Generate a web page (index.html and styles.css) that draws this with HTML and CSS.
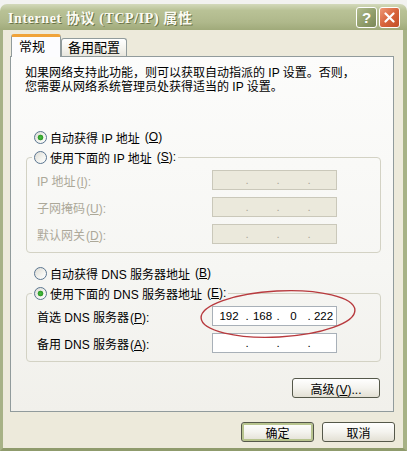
FILE: index.html
```html
<!DOCTYPE html>
<html lang="zh-CN">
<head>
    <meta charset="UTF-8">
    <title>Internet 协议 (TCP/IP) 属性</title>
    <link rel="stylesheet" href="styles.css">
</head>
<body>
    <div class="window">
        <div class="titlebar">
            <span class="title">Internet 协议 (TCP/IP) 属性</span>
            <div class="caption-btns">
                <span class="cbtn help">?</span>
                <span class="cbtn close">
                    <svg width="11" height="11" viewBox="0 0 11 11"><path d="M1.5 1.5 L9.5 9.5 M9.5 1.5 L1.5 9.5" stroke="#fff" stroke-width="2.2" stroke-linecap="round"/></svg>
                </span>
            </div>
        </div>

        <div class="frame">
            <div class="tabs">
                <div class="tab active">常规</div>
                <div class="tab">备用配置</div>
            </div>

            <div class="panel">
                <p class="intro">如果网络支持此功能，则可以获取自动指派的 IP 设置。否则，<br>您需要从网络系统管理员处获得适当的 IP 设置。</p>

                <div class="radio first"><span class="mark checked"></span>自动获得 IP 地址<span class="key">(<u>O</u>)</span></div>
                <fieldset class="group">
                    <legend><div class="radio"><span class="mark"></span>使用下面的 IP 地址<span class="key">(<u>S</u>):</span></div></legend>
                    <div class="row disabled">
                        <span>IP 地址<span class="key">(<u>I</u>):</span></span>
                        <div class="ip off"><span class="seg"></span><span class="dot">.</span><span class="seg"></span><span class="dot">.</span><span class="seg"></span><span class="dot">.</span><span class="seg"></span></div>
                    </div>
                    <div class="row disabled">
                        <span>子网掩码<span class="key">(<u>U</u>):</span></span>
                        <div class="ip off"><span class="seg"></span><span class="dot">.</span><span class="seg"></span><span class="dot">.</span><span class="seg"></span><span class="dot">.</span><span class="seg"></span></div>
                    </div>
                    <div class="row disabled">
                        <span>默认网关<span class="key">(<u>D</u>):</span></span>
                        <div class="ip off"><span class="seg"></span><span class="dot">.</span><span class="seg"></span><span class="dot">.</span><span class="seg"></span><span class="dot">.</span><span class="seg"></span></div>
                    </div>
                </fieldset>

                <div class="radio second"><span class="mark"></span>自动获得 DNS 服务器地址<span class="key">(<u>B</u>)</span></div>
                <fieldset class="group">
                    <legend><div class="radio"><span class="mark checked"></span>使用下面的 DNS 服务器地址<span class="key">(<u>E</u>):</span></div></legend>
                    <div class="row">
                        <span>首选 DNS 服务器<span class="key">(<u>P</u>):</span></span>
                        <div class="ip"><span class="seg">192</span><span class="dot">.</span><span class="seg">168</span><span class="dot">.</span><span class="seg">0</span><span class="dot">.</span><span class="seg">222</span></div>
                    </div>
                    <div class="row">
                        <span>备用 DNS 服务器<span class="key">(<u>A</u>):</span></span>
                        <div class="ip"><span class="seg"></span><span class="dot">.</span><span class="seg"></span><span class="dot">.</span><span class="seg"></span><span class="dot">.</span><span class="seg"></span></div>
                    </div>
                </fieldset>

                <div class="adv-row">
                    <button class="btn adv">高级<span class="key">(<u>V</u>)...</span></button>
                </div>
            </div>

            <div class="footer">
                <button class="btn default">确定</button>
                <button class="btn">取消</button>
            </div>
        </div>
    </div>

    <!-- red marker drawn over the screenshot -->
    <svg class="marker" width="407" height="451" viewBox="0 0 407 451">
        <ellipse cx="278" cy="314" rx="77" ry="23" transform="rotate(-3 278 314)" fill="none" stroke="#b83a3e" stroke-width="1.4"/>
    </svg>
</body>
</html>
```

FILE: styles.css
```css
* {
    margin: 0;
    padding: 0;
    box-sizing: border-box;
}

body {
    font-family: "Liberation Sans", "Noto Sans CJK SC", sans-serif;
    font-size: 12px;
    color: #000;
    background: #f2f2f0;
    width: 407px;
    height: 451px;
    overflow: hidden;
}

.key {
    font-family: "Liberation Sans", sans-serif;
    margin-left: 1px;
}

.window {
    margin-top: 4px;
    width: 407px;
    height: 447px;
    display: flex;
    flex-direction: column;
}

.titlebar {
    height: 26px;
    border-radius: 7px 7px 0 0;
    background: linear-gradient(180deg, #d3d9bb 0%, #b9c296 25%, #afb88b 70%, #a0aa7a 100%);
    display: flex;
    align-items: center;
    justify-content: space-between;
    padding: 0 7px 0 8px;
}

.title {
    font-family: "Liberation Serif", "Noto Sans CJK SC", serif;
    font-size: 14px;
    font-weight: bold;
    color: #fbfbf4;
    text-shadow: 1px 1px 0 #6c7548;
    letter-spacing: 0.6px;
}

.caption-btns {
    display: flex;
    gap: 2px;
}

.cbtn {
    width: 21px;
    height: 21px;
    border: 1px solid #fff;
    border-radius: 3px;
    display: flex;
    align-items: center;
    justify-content: center;
}

.help {
    background: linear-gradient(135deg, #b0bb8c 0%, #8e9b68 60%, #7b8858 100%);
    color: #fff;
    font-weight: bold;
    font-size: 15px;
}

.close {
    background: linear-gradient(135deg, #ee9a78 0%, #d8643c 50%, #c24e26 100%);
}

.frame {
    flex: 1;
    background: #edeadb;
    border-left: 3px solid #a7b286;
    border-right: 4px solid #a7b286;
    border-bottom: 3px solid #8f9b6c;
    padding: 4px 9px 0 7px;
}

.tabs {
    display: flex;
    align-items: flex-end;
    height: 22px;
    padding-left: 1px;
}

.tab {
    height: 18px;
    padding: 0 6px;
    line-height: 17px;
    border: 1px solid #919b9c;
    border-bottom: none;
    border-radius: 3px 3px 0 0;
    background: linear-gradient(180deg, #fff 0%, #f3f2ec 60%, #e8e6dd 100%);
    font-size: 13px;
}

.tab.active {
    height: 23px;
    margin-bottom: -1px;
    width: 50px;
    padding: 0 7px;
    line-height: 20px;
    background: #fcfcfe;
    border-top: 3px solid #f0a33a;
    position: relative;
    z-index: 1;
}

.panel {
    height: 356px;
    border: 1px solid #919b9c;
    background: linear-gradient(180deg, #fcfcfb 0%, #f6f6f3 60%, #f1f0eb 100%);
}

.intro {
    margin: 9px 0 0 14px;
    line-height: 14px;
}

.radio {
    display: flex;
    align-items: center;
    height: 20px;
    gap: 3px;
    white-space: nowrap;
}

.radio .key {
    margin-left: 2px;
}

.radio.first {
    margin: 33px 0 0 23px;
}

.radio.second {
    margin: 10px 0 0 23px;
}

.mark {
    width: 13px;
    height: 13px;
    flex: none;
    border-radius: 50%;
    border: 1px solid #5a7590;
    background: linear-gradient(135deg, #dcdbd4 0%, #f4f4f0 60%, #fff 100%);
}

.mark.checked {
    background: radial-gradient(circle, #48c040 0, #2f9a2a 2.5px, transparent 3.2px),
                linear-gradient(135deg, #dcdbd4 0%, #f4f4f0 60%, #fff 100%);
}

.group {
    margin: 0 12px 0 15px;
    border: 1px solid #d3d2c4;
    border-radius: 4px;
    padding: 3px 0 8px 10px;
}

.group legend {
    margin-left: -5px;
    padding: 0 2px;
}

.row {
    display: grid;
    grid-template-columns: 175px 125px;
    align-items: center;
}

.row + .row {
    margin-top: 7px;
}

.row.disabled {
    color: #aca899;
}

.ip {
    height: 20px;
    border: 1px solid #a8b0b8;
    background: #fff;
    display: flex;
    align-items: center;
    font-size: 11.5px;
}

.ip.off {
    background: #ebe9dc;
    border-color: #cac8ba;
    color: #aca899;
}

.seg {
    width: 27px;
    text-align: center;
}

.seg:first-child {
    width: 32px;
}

.seg:last-child {
    width: 25px;
}

.dot {
    width: 4px;
    text-align: center;
}

.adv-row {
    display: flex;
    justify-content: flex-end;
    margin: 16px 13px 0 0;
}

.btn {
    font-family: "Liberation Sans", "Noto Sans CJK SC", sans-serif;
    font-size: 12px;
    height: 20px;
    border: 1px solid #55584a;
    border-radius: 3px;
    background: linear-gradient(180deg, #ffffff 0%, #f4f3ee 50%, #e3e0d4 100%);
    color: #000;
}

.btn.adv {
    width: 88px;
}

.footer {
    display: flex;
    justify-content: flex-end;
    gap: 8px;
    margin: 10px -1px 0 0;
}

.footer .btn {
    width: 73px;
}

.btn.default {
    box-shadow: inset 0 0 0 2px #b8c48e;
}

.marker {
    position: absolute;
    left: 0;
    top: 0;
    pointer-events: none;
}
```
